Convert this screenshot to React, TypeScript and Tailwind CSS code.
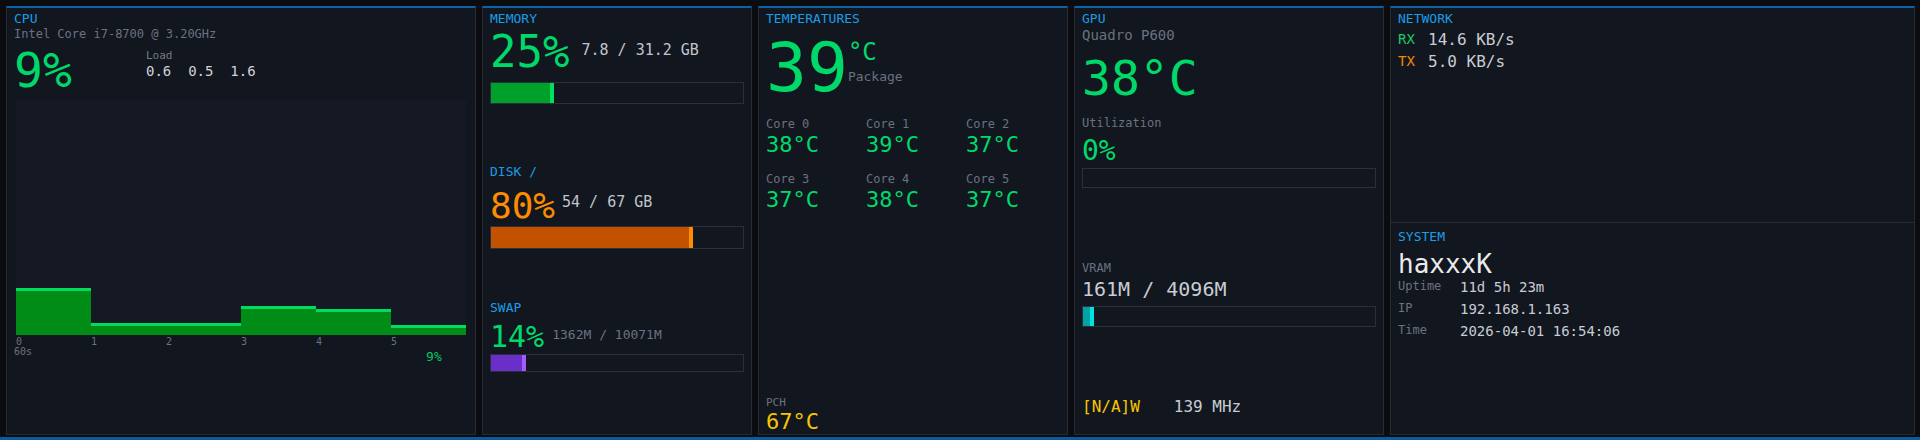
import { FC, ReactNode } from "react";

const Panel: FC<{ children: ReactNode; className?: string }> = ({ children, className = "" }) => (
	<div
		className={`flex flex-col min-h-0 overflow-hidden border border-[#262b37] border-t-2 border-t-[#0b62a6] bg-[#12161f] ${className}`}
	>
		{children}
	</div>
);

const Title: FC<{ children: ReactNode }> = ({ children }) => (
	<div className="text-[13px] leading-[16px] text-[#1a9de6]">{children}</div>
);

const Bar: FC<{ pct: number; h: string; fill: string; edge: string }> = ({ pct, h, fill, edge }) => (
	<div className={`border border-[#2a2f3b] ${h}`}>
		{pct > 0 && <div className={`h-full border-r-4 ${fill} ${edge}`} style={{ width: `${pct}%` }} />}
	</div>
);

// cpu history, bar heights in px of a 235px chart
const history = [47, 12, 12, 29, 26, 10];

const cores = [
	{ label: "Core 0", value: "38°C" },
	{ label: "Core 1", value: "39°C" },
	{ label: "Core 2", value: "37°C" },
	{ label: "Core 3", value: "37°C" },
	{ label: "Core 4", value: "38°C" },
	{ label: "Core 5", value: "37°C" },
];

const sysRows = [
	{ label: "Uptime", value: "11d 5h 23m" },
	{ label: "IP", value: "192.168.1.163" },
	{ label: "Time", value: "2026-04-01 16:54:06" },
];

const CpuPanel = () => (
	<Panel className="px-[7px] pt-[3px]">
		<Title>CPU</Title>
		<div className="text-[12px] leading-[14px] text-[#6b7280]">Intel Core i7-8700 @ 3.20GHz</div>
		<div className="flex items-start mt-[5px]">
			<div className="w-[132px] text-[48px] leading-none text-[#00d96a]">9%</div>
			<div className="pt-[3px]">
				<div className="text-[11px] leading-[14px] text-[#737a87]">Load</div>
				<div className="text-[14px] leading-[16px] text-[#d0d4da] whitespace-pre">0.6  0.5  1.6</div>
			</div>
		</div>
		<div className="ml-[2px] mt-[6px] w-[450px] h-[235px] bg-[#141923]">
			<svg width="450" height="235" viewBox="0 0 450 235">
				{history.map((v, i) => (
					<g key={i}>
						<rect x={i * 75} y={235 - v} width="75" height={v} fill="#008c17" />
						<rect x={i * 75} y={235 - v} width="75" height="3" fill="#00dd5e" />
					</g>
				))}
			</svg>
		</div>
		<div className="ml-[2px] mt-[2px] flex text-[10px] leading-[10px] text-[#6b7280]">
			{["0", "1", "2", "3", "4", "5"].map((l) => (
				<div key={l} className="w-[75px]">
					{l}
				</div>
			))}
		</div>
		<div className="flex items-start">
			<div className="text-[10px] leading-[10px] text-[#6b7280]">60s</div>
			<div className="ml-[394px] mt-[2px] text-[13px] leading-[16px] text-[#00c862]">9%</div>
		</div>
	</Panel>
);

const MemoryPanel = () => (
	<Panel className="px-[7px] pt-[3px]">
		<Title>MEMORY</Title>
		<div className="flex items-start mt-[3px]">
			<div className="text-[44px] leading-none text-[#00d96a]">25%</div>
			<div className="ml-3 mt-[11px] text-[15px] leading-[18px] text-[#c0c5cd]">7.8 / 31.2 GB</div>
		</div>
		<div className="mt-[8px]">
			<Bar pct={25} h="h-[22px]" fill="bg-[#00a12b]" edge="border-r-[#00e05c]" />
		</div>

		<div className="mt-[60px]">
			<Title>DISK /</Title>
		</div>
		<div className="flex items-start mt-[8px]">
			<div className="text-[36px] leading-none text-[#ff8c00]">80%</div>
			<div className="ml-[7px] mt-[5px] text-[15px] leading-[18px] text-[#c0c5cd]">54 / 67 GB</div>
		</div>
		<div className="mt-[2px]">
			<Bar pct={80} h="h-[23px]" fill="bg-[#c25100]" edge="border-r-[#ff8c00]" />
		</div>

		<div className="mt-[51px]">
			<Title>SWAP</Title>
		</div>
		<div className="flex items-start mt-[6px]">
			<div className="text-[30px] leading-none text-[#00d96a]">14%</div>
			<div className="ml-[8px] mt-[5px] text-[13px] leading-[16px] text-[#6b7280]">1362M / 10071M</div>
		</div>
		<div className="mt-[2px]">
			<Bar pct={14} h="h-[18px]" fill="bg-[#6a2fc8]" edge="border-r-[#a35cff]" />
		</div>
	</Panel>
);

const TempPanel = () => (
	<Panel className="px-[7px] pt-[3px] pb-[1px]">
		<Title>TEMPERATURES</Title>
		<div className="flex items-start mt-[7px]">
			<div className="text-[68px] leading-none text-[#00d96a]">39</div>
			<div>
				<div className="mt-[6px] text-[24px] leading-none text-[#00d96a]">°C</div>
				<div className="mt-[5px] text-[13px] leading-[16px] text-[#6b7280]">Package</div>
			</div>
		</div>
		<div className="grid grid-cols-3 w-[300px] mt-[14px] gap-y-[13px]">
			{cores.map((c) => (
				<div key={c.label}>
					<div className="text-[12px] leading-[16px] text-[#6b7280]">{c.label}</div>
					<div className="text-[22px] leading-[26px] text-[#00d96a]">{c.value}</div>
				</div>
			))}
		</div>
		<div className="mt-auto">
			<div className="text-[11px] leading-none text-[#6b7280]">PCH</div>
			<div className="mt-[3px] text-[22px] leading-none text-[#f7c600]">67°C</div>
		</div>
	</Panel>
);

const GpuPanel = () => (
	<Panel className="px-[7px] pt-[3px]">
		<Title>GPU</Title>
		<div className="text-[14px] leading-[17px] text-[#6b7280]">Quadro P600</div>
		<div className="mt-[10px] text-[48px] leading-none text-[#00d96a]">38°C</div>
		<div className="mt-[13px] text-[12px] leading-[16px] text-[#6b7280]">Utilization</div>
		<div className="mt-[6px] text-[28px] leading-none text-[#00d96a]">0%</div>
		<div className="mt-[3px]">
			<Bar pct={0} h="h-[20px]" fill="bg-[#00a12b]" edge="border-r-[#00e05c]" />
		</div>
		<div className="mt-[72px] text-[12px] leading-[16px] text-[#6b7280]">VRAM</div>
		<div className="mt-[3px] text-[20px] leading-none text-[#c8ccd4]">161M / 4096M</div>
		<div className="mt-[7px]">
			<Bar pct={3.93} h="h-[21px]" fill="bg-[#00a3a3]" edge="border-r-[#00e2e2]" />
		</div>
		<div className="mt-auto mb-[19px] flex text-[16px] leading-none">
			<span className="text-[#f7c600]">[N/A]W</span>
			<span className="ml-[34px] text-[#c8ccd4]">139 MHz</span>
		</div>
	</Panel>
);

const NetSysPanel = () => (
	<Panel>
		<div className="h-[215px] shrink-0 border-b border-[#262b37] px-[7px] pt-[3px]">
			<Title>NETWORK</Title>
			<div className="mt-[5px] flex items-start leading-none">
				<span className="w-[30px] text-[14px] text-[#1cc964]">RX</span>
				<span className="text-[16px] text-[#c8ccd4]">14.6 KB/s</span>
			</div>
			<div className="mt-[6px] flex items-start leading-none">
				<span className="w-[30px] text-[14px] text-[#f08a00]">TX</span>
				<span className="text-[16px] text-[#c8ccd4]">5.0 KB/s</span>
			</div>
		</div>
		<div className="px-[7px] pt-[6px]">
			<Title>SYSTEM</Title>
			<div className="mt-[6px] text-[26px] leading-none text-[#e8eaed]">haxxxK</div>
			<div className="mt-[3px] flex flex-col gap-[8px]">
				{sysRows.map((r) => (
					<div key={r.label} className="flex items-start leading-none">
						<span className="w-[62px] text-[12px] text-[#6b7280]">{r.label}</span>
						<span className="text-[14px] text-[#c8ccd4]">{r.value}</span>
					</div>
				))}
			</div>
		</div>
	</Panel>
);

const App = () => (
	<div className="h-[440px] w-[1920px] overflow-hidden flex flex-col bg-[#0a0c10] font-['DejaVu_Sans_Mono',monospace]">
		<div className="flex-1 min-h-0 grid grid-cols-[470px_270px_310px_310px_525px] gap-[6px] pl-[6px] pt-[6px] pb-[2px]">
			<CpuPanel />
			<MemoryPanel />
			<TempPanel />
			<GpuPanel />
			<NetSysPanel />
		</div>
		<div className="h-[3px] shrink-0 bg-[#0b5a9c]" />
	</div>
);

export default App;
